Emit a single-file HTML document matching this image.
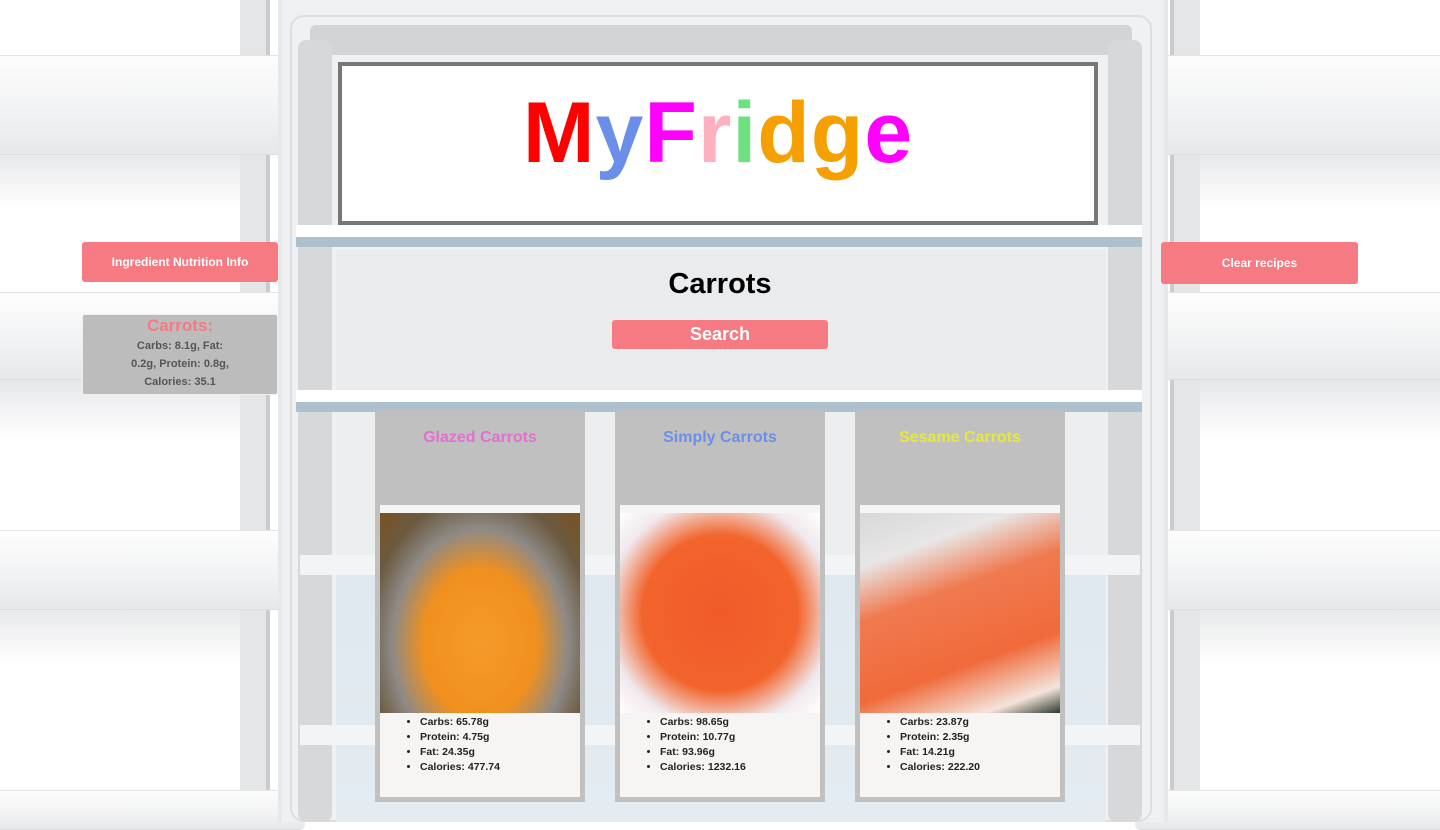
<!DOCTYPE html>
<html><head><meta charset="utf-8">
<style>
*{margin:0;padding:0;box-sizing:border-box}
body{width:1440px;height:822px;position:relative;overflow:hidden;background:#fff;font-family:"Liberation Sans",Arial,sans-serif}
.a{position:absolute}
.shelfL,.shelfR{position:absolute;width:305px;background:linear-gradient(180deg,#fdfdfd 0%,#f3f4f5 50%,#e7e8ea 100%);border-top:1px solid #e3e4e6;border-bottom:1px solid #dcdde0}
.shelfL{left:0;border-radius:0 6px 6px 0}
.shelfR{right:0;border-radius:6px 0 0 6px}
.wedge{position:absolute;width:240px;height:60px;background:linear-gradient(180deg,#e6e7e9,#fff)}
.btn{background:#f67a82;color:#fff;font-weight:bold;text-align:center;border-radius:3px}
.card{position:absolute;top:410px;width:210px;height:392px;background:#c0c0c0}
.card h3{position:absolute;top:19px;width:100%;text-align:center;font-size:16px;font-weight:bold}
.inner{position:absolute;left:5px;top:95px;width:200px;height:292px;background:#f6f5f3}
.img{position:absolute;left:0;top:8px;width:200px;height:200px}
.inner ul{position:absolute;left:40px;top:210px;font-size:10.5px;font-weight:bold;color:#222;line-height:15px;padding-left:0}
</style></head><body>
<!-- left door -->
<div class="a" style="left:0;top:0;width:275px;height:822px;background:#fff"></div>
<div class="a" style="left:240px;top:0;width:26px;height:822px;background:#e4e6e8"></div>
<div class="a" style="left:266px;top:0;width:4px;height:822px;background:#c9cbcd"></div>
<div class="wedge" style="left:0;top:150px"></div>
<div class="wedge" style="left:0;top:380px"></div>
<div class="wedge" style="left:0;top:605px"></div>
<div class="shelfL" style="top:55px;height:100px"></div>
<div class="shelfL" style="top:292px;height:88px"></div>
<div class="shelfL" style="top:530px;height:80px"></div>
<div class="shelfL" style="top:790px;height:40px"></div>
<!-- right door -->
<div class="a" style="right:0;top:0;width:272px;height:822px;background:#fff"></div>
<div class="a" style="right:240px;top:0;width:26px;height:822px;background:#e4e6e8"></div>
<div class="a" style="right:266px;top:0;width:4px;height:822px;background:#c9cbcd"></div>
<div class="wedge" style="right:0;top:150px"></div>
<div class="wedge" style="right:0;top:380px"></div>
<div class="wedge" style="right:0;top:605px"></div>
<div class="shelfR" style="top:55px;height:100px"></div>
<div class="shelfR" style="top:292px;height:88px"></div>
<div class="shelfR" style="top:530px;height:80px"></div>
<div class="shelfR" style="top:790px;height:40px"></div>
<!-- interior -->
<div class="a" style="left:278px;top:0;width:890px;height:822px;background:#eef0f2;border-left:4px solid #e6e8ea;border-right:4px solid #e6e8ea"></div>
<div class="a" style="left:290px;top:15px;width:862px;height:807px;background:#f0f1f2;border-radius:14px;border:2px solid #dcdedf"></div>
<div class="a" style="left:310px;top:25px;width:822px;height:30px;background:#d3d4d6;border-radius:6px"></div>
<div class="a" style="left:298px;top:40px;width:34px;height:782px;background:#d6d8da;border-radius:8px"></div>
<div class="a" style="left:1108px;top:40px;width:34px;height:782px;background:#d6d8da;border-radius:8px"></div>
<div class="a" style="left:336px;top:250px;width:770px;height:140px;background:#eaebed"></div>
<div class="a" style="left:296px;top:225px;width:846px;height:12px;background:#fff"></div>
<div class="a" style="left:296px;top:237px;width:846px;height:10px;background:#adc0ce"></div>
<div class="a" style="left:296px;top:390px;width:846px;height:12px;background:#fff"></div>
<div class="a" style="left:296px;top:402px;width:846px;height:10px;background:#adc0ce"></div>
<div class="a" style="left:336px;top:412px;width:770px;height:410px;background:linear-gradient(180deg,#eceef0 0%,#eceef0 35%,#dfe8ef 40%,#e4ecf2 100%)"></div>
<div class="a" style="left:300px;top:555px;width:840px;height:20px;background:#f3f4f5"></div>
<div class="a" style="left:300px;top:725px;width:840px;height:20px;background:#f3f4f5"></div>
<!-- logo box -->
<div class="a" style="left:338px;top:62px;width:760px;height:163px;background:#fff;border:4px solid #777"></div>
<div class="a" style="left:338px;top:78px;width:760px;text-align:center;font-size:86px;font-weight:bold;letter-spacing:1px;line-height:110px">
<span style="color:#f00">M</span><span style="color:#6b8fe8">y</span><span style="color:#f0f">F</span><span style="color:#ffb0c0">r</span><span style="color:#6de080">i</span><span style="color:#f5a000">d</span><span style="color:#f5a000">g</span><span style="color:#f0f">e</span></div>
<!-- search -->
<div class="a" style="left:520px;top:268px;width:400px;text-align:center;font-size:29px;font-weight:bold;color:#000">Carrots</div>
<div class="a btn" style="left:612px;top:320px;width:216px;height:29px;font-size:18px;line-height:29px">Search</div>
<!-- side buttons -->
<div class="a btn" style="left:82px;top:242px;width:196px;height:40px;font-size:12px;line-height:40px">Ingredient Nutrition Info</div>
<div class="a btn" style="left:1161px;top:242px;width:197px;height:42px;font-size:12px;line-height:42px">Clear recipes</div>
<div class="a" style="left:82px;top:314px;width:196px;height:81px;background:#bcbcbc;border:1px solid #eee;border-radius:3px;text-align:center">
<div style="color:#f67a82;font-size:17px;font-weight:bold;margin-top:1px">Carrots:</div>
<div style="color:#555;font-size:11px;font-weight:bold;line-height:18px;padding:0 40px;margin-top:1px">Carbs: 8.1g, Fat: 0.2g, Protein: 0.8g, Calories: 35.1</div></div>
<!-- cards -->
<div class="card" style="left:375px"><h3 style="color:#e56fd0">Glazed Carrots</h3><div class="inner">
<div class="img" style="background:radial-gradient(ellipse at 50% 65%,#f59a2a 0%,#f0901e 40%,#8e8a86 62%,#6b5a40 80%,#7a5220 100%)"></div>
<ul><li>Carbs: 65.78g</li><li>Protein: 4.75g</li><li>Fat: 24.35g</li><li>Calories: 477.74</li></ul></div></div>
<div class="card" style="left:615px"><h3 style="color:#6b8fe8">Simply Carrots</h3><div class="inner">
<div class="img" style="background:radial-gradient(ellipse at 50% 50%,#f05a2a 0%,#f2642c 55%,#f0e8ec 80%,#fff 100%)"></div>
<ul><li>Carbs: 98.65g</li><li>Protein: 10.77g</li><li>Fat: 93.96g</li><li>Calories: 1232.16</li></ul></div></div>
<div class="card" style="left:855px"><h3 style="color:#e8e83a">Sesame Carrots</h3><div class="inner">
<div class="img" style="background:linear-gradient(160deg,#d8d8da 0%,#e8e6e6 20%,#f07a50 40%,#f06a3a 70%,#f4e4dc 90%,#2a3a2a 100%)"></div>
<ul><li>Carbs: 23.87g</li><li>Protein: 2.35g</li><li>Fat: 14.21g</li><li>Calories: 222.20</li></ul></div></div>
</body></html>
